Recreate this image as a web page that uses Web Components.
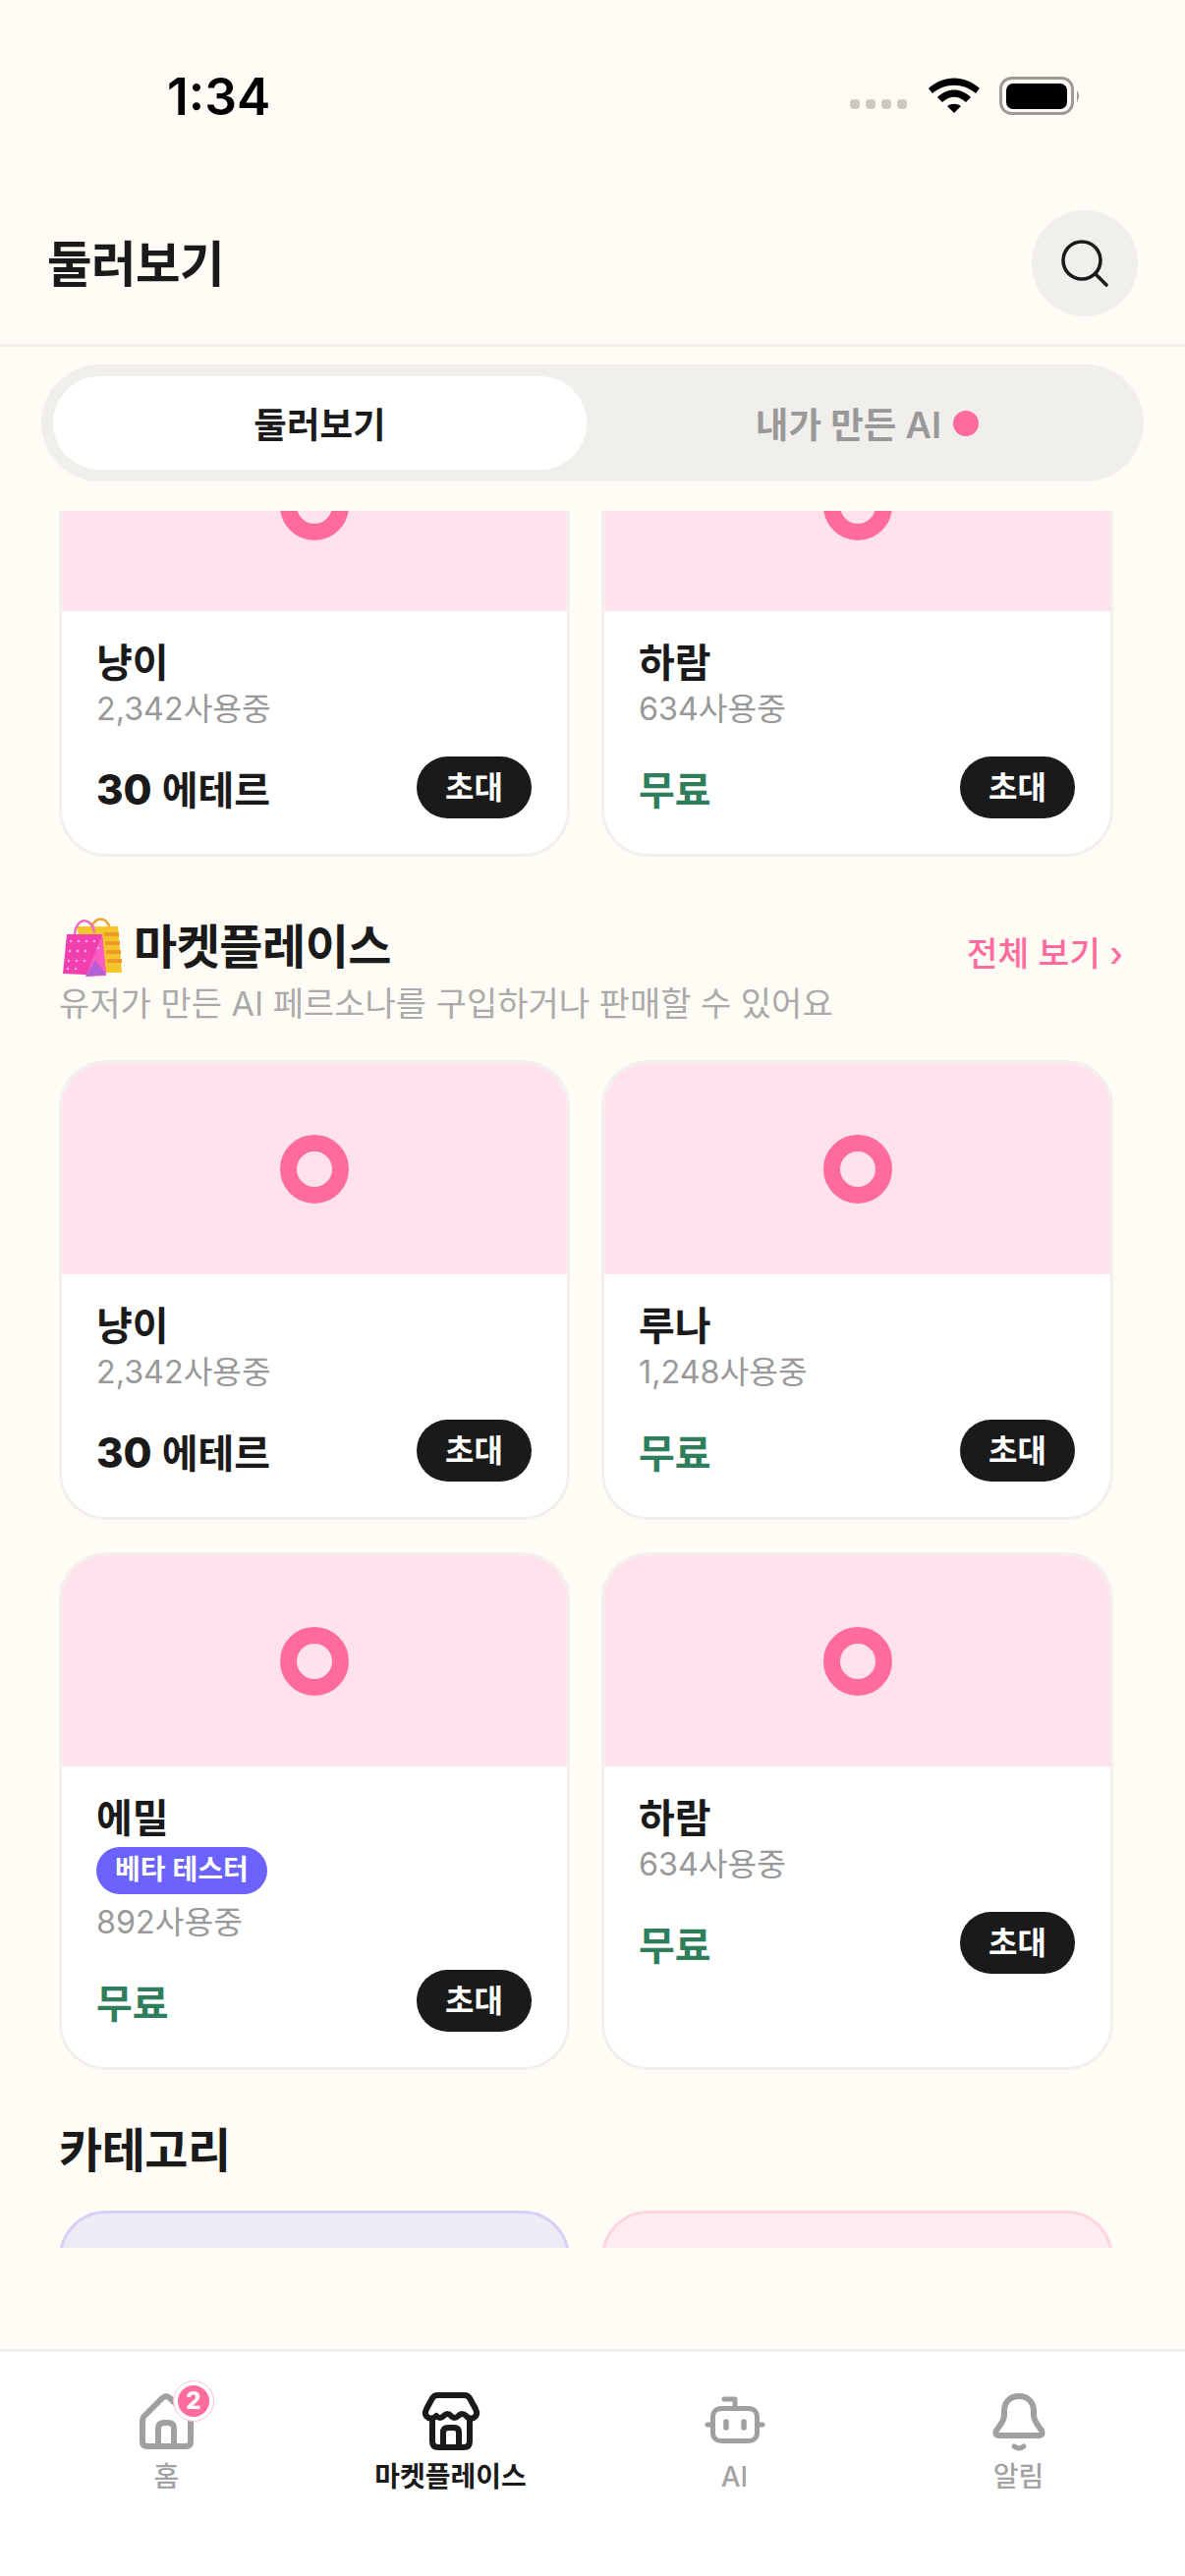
<!DOCTYPE html>
<html lang="ko">
<head>
<meta charset="utf-8">
<title>둘러보기</title>
<style>
  html, body { margin: 0; padding: 0; background: #fffcf5; }
  body { font-family: Inter, "Noto Sans CJK KR", sans-serif; color: #1a1a1a; }
</style>
</head>
<body>
<app-shell>
  <status-bar slot="top" time="1:34"></status-bar>
  <page-header slot="top" title="둘러보기"></page-header>
  <seg-tabs slot="top"></seg-tabs>

  <persona-grid>
    <persona-card name="냥이" users="2,342사용중" cost="30"></persona-card>
    <persona-card name="하람" users="634사용중"></persona-card>
  </persona-grid>

  <section-head title="마켓플레이스" sub="유저가 만든 AI 페르소나를 구입하거나 판매할 수 있어요" more="전체 보기 ›">
    <shopping-bags></shopping-bags>
  </section-head>
  <persona-grid>
    <persona-card name="냥이" users="2,342사용중" cost="30"></persona-card>
    <persona-card name="루나" users="1,248사용중"></persona-card>
    <persona-card name="에밀" users="892사용중" badge="베타 테스터"></persona-card>
    <persona-card name="하람" users="634사용중"></persona-card>
  </persona-grid>

  <section-head title="카테고리" plain></section-head>
  <persona-grid>
    <category-card tone="violet"></category-card>
    <category-card tone="rose"></category-card>
  </persona-grid>

  <tab-bar slot="bottom"></tab-bar>
</app-shell>

<script>
const define = (tag, html, setup) => {
  const template = document.createElement("template");
  template.innerHTML = html;
  customElements.define(tag, class extends HTMLElement {
    constructor() {
      super();
      this.attachShadow({ mode: "open" }).appendChild(template.content.cloneNode(true));
    }
    connectedCallback() {
      if (setup) setup(this, this.shadowRoot);
    }
  });
};

define("app-shell", `
  <style>
    :host { display: flex; flex-direction: column; width: 1206px; height: 2622px; overflow: hidden; background: #fffcf5; }
    #scroll { flex: 1; min-height: 0; overflow: hidden; margin-bottom: 103px; }
    /* list is parked partway down, the first row is already scrolled off */
    #list { margin-top: -116px; }
  </style>
  <slot name="top"></slot>
  <div id="scroll"><div id="list"><slot></slot></div></div>
  <slot name="bottom"></slot>
`);

define("status-bar", `
  <style>
    :host { display: flex; align-items: flex-start; height: 214px; box-sizing: border-box; padding: 67px 0 0 170px; }
    #time { font: 600 51.5px/62px Inter, sans-serif; color: #000; width: 695px; }
    svg { display: block; margin-top: 11px; }
  </style>
  <div id="time"></div>
  <svg width="240" height="40" viewBox="0 0 240 40">
    <g fill="#ccc9c3">
      <rect x="0" y="23" width="10" height="10" rx="4"/>
      <rect x="16" y="23" width="10" height="10" rx="4"/>
      <rect x="32" y="23" width="10" height="10" rx="4"/>
      <rect x="48" y="23" width="10" height="10" rx="4"/>
    </g>
    <g fill="#000">
      <path d="M80 11 C95 -3 117 -3 132 11 L128 16 C115 5 97 5 84 16 Z" transform="translate(0 1)"/>
      <path d="M89 21 C99 11 113 11 123 21 L118 26 C110 19 102 19 94 26 Z"/>
      <path d="M99 30 C103 27 109 27 113 30 L106 37 Z"/>
    </g>
    <rect x="153.5" y="1.5" width="73" height="36" rx="11" fill="none" stroke="#9c9a94" stroke-width="3"/>
    <rect x="159" y="7" width="62" height="26" rx="7" fill="#000"/>
    <path d="M231 14 Q235 19 231 26 Z" fill="#9c9a94"/>
  </svg>
`, (el, root) => { root.getElementById("time").textContent = el.getAttribute("time"); });

define("page-header", `
  <style>
    :host { display: flex; align-items: center; justify-content: space-between; padding: 0 48px 28px; border-bottom: 3px solid #f0efec; }
    h1 { margin: 0; font-size: 49.5px; line-height: 106px; font-weight: 700; letter-spacing: -0.5px; padding-top: 2px; }
    #search { width: 108px; height: 108px; border-radius: 50%; background: #f0efec; display: flex; align-items: center; justify-content: center; }
  </style>
  <h1></h1>
  <div id="search">
    <svg width="56" height="56" viewBox="0 0 56 56" fill="none" stroke="#1a1a1a" stroke-width="3.6" stroke-linecap="round">
      <circle cx="25" cy="25" r="19"/>
      <path d="M39 39 L50 50"/>
    </svg>
  </div>
`, (el, root) => { root.querySelector("h1").textContent = el.getAttribute("title"); });

define("seg-tabs", `
  <style>
    :host { display: flex; margin: 18px 42px 30px; padding: 12px; height: 119px; box-sizing: border-box; border-radius: 60px; background: #f0efec; font-size: 36.5px; font-weight: 600; }
    div { display: flex; align-items: center; justify-content: center; }
    #on { width: 543px; background: #fff; border-radius: 48px; color: #1a1a1a; }
    #off { flex: 1; gap: 12px; color: #999; padding-left: 16px; }
    i { width: 26px; height: 26px; border-radius: 50%; background: #ff6b9d; }
  </style>
  <div id="on">둘러보기</div>
  <div id="off">내가 만든 AI<i></i></div>
`);

define("persona-grid", `
  <style>
    :host { display: grid; grid-template-columns: 520px 521px; gap: 33px 32px; padding-left: 60px; }
  </style>
  <slot></slot>
`);

define("persona-card", `
  <style>
    :host { display: block; background: #fff; border: 3px solid #f2f0ec; border-radius: 48px; overflow: hidden; box-sizing: border-box; }
    #art { height: 215px; background: #ffe2ec; display: flex; align-items: center; justify-content: center; }
    #art i { width: 36px; height: 36px; border: 17px solid #ff6b9d; border-radius: 50%; }
    #body { padding: 29px 36px 36px 35px; }
    #name { font-size: 40px; line-height: 48px; font-weight: 600; }
    #badge { display: none; width: fit-content; margin: 5px 0 6px; padding: 0 19px; height: 48px; line-height: 47px; border-radius: 24px; background: #6c63ff; color: #fff; font-size: 28px; font-weight: 600; }
    #users { font-size: 32.3px; line-height: 46px; color: #999; }
    #row { display: flex; align-items: center; justify-content: space-between; margin-top: 25px; }
    #price { font-size: 40px; font-weight: 600; color: #2e7d5b; }
    #price.paid { color: #1a1a1a; }
    #price b { font-weight: 800; font-size: 42px; }
    button { all: unset; width: 117px; height: 63px; border-radius: 32px; background: #1a1a1a; color: #fff; font-size: 32px; font-weight: 600; text-align: center; line-height: 61px; }
  </style>
  <div id="art"><i></i></div>
  <div id="body">
    <div id="name"></div>
    <div id="badge"></div>
    <div id="users"></div>
    <div id="row"><div id="price">무료</div><button>초대</button></div>
  </div>
`, (el, root) => {
  root.getElementById("name").textContent = el.getAttribute("name");
  root.getElementById("users").textContent = el.getAttribute("users");
  const badge = el.getAttribute("badge");
  if (badge) {
    const node = root.getElementById("badge");
    node.textContent = badge;
    node.style.display = "block";
  }
  const cost = el.getAttribute("cost");
  if (cost) {
    const price = root.getElementById("price");
    price.className = "paid";
    price.innerHTML = `<b>${cost}</b> 에테르`;
  }
});

define("category-card", `
  <style>
    :host { display: block; height: 300px; box-sizing: border-box; border: 3px solid; border-radius: 48px; }
    :host([tone="violet"]) { background: #eeebf7; border-color: #d5d0f5; }
    :host([tone="rose"]) { background: #ffecf0; border-color: #ffd5e0; }
  </style>
`);

define("section-head", `
  <style>
    :host { display: block; padding: 59px 63px 35px 60px; }
    :host([plain]) { padding: 50px 63px 29px 60px; }
    #top { display: flex; align-items: center; gap: 10px; }
    h2 { margin: 0; font-size: 48px; line-height: 64px; font-weight: 700; flex: 1; letter-spacing: -0.5px; }
    #more { font-size: 34.5px; color: #ff6b9d; font-weight: 500; margin-top: 8px; }
    #sub { font-size: 34px; line-height: 44px; color: #aaa; margin-top: 3px; }
    :host([plain]) #sub { display: none; }
  </style>
  <div id="top"><slot></slot><h2></h2><div id="more"></div></div>
  <div id="sub"></div>
`, (el, root) => {
  root.querySelector("h2").textContent = el.getAttribute("title");
  root.getElementById("sub").textContent = el.getAttribute("sub") || "";
  root.getElementById("more").textContent = el.getAttribute("more") || "";
});

define("shopping-bags", `
  <style>
    :host { display: block; width: 66px; height: 66px; }
    svg { display: block; }
  </style>
  <svg width="66" height="66" viewBox="0 0 66 66" fill="none">
    <path d="M33 16 C34 2 48 0 52 14" stroke="#f0a030" stroke-width="2.5"/>
    <path d="M18 12 H60 L64 59 H26 Z" fill="#f6c52c"/>
    <path d="M46 20 L61 20 M47 29 L62 29 M48 38 L63 38 M49 47 L64 47" stroke="#ee9a2a" stroke-width="4"/>
    <path d="M16 20 C17 3 33 1 36 18" stroke="#ee6fc0" stroke-width="2.5"/>
    <path d="M8 20 H44 L48 62 L4 60 Z" fill="#f23fb0"/>
    <path d="M44 20 L48 62 L27 63 Z" fill="#f95cc4"/>
    <path d="M27 63 L37 46 L48 61 Z" fill="#b65fd6"/>
    <g fill="#ffb0e0">
      <circle cx="12" cy="27" r="1.2"/><circle cx="20" cy="27" r="1.2"/><circle cx="28" cy="27" r="1.2"/><circle cx="36" cy="27" r="1.2"/>
      <circle cx="11" cy="37" r="1.2"/><circle cx="19" cy="37" r="1.2"/><circle cx="27" cy="37" r="1.2"/><circle cx="40" cy="34" r="1.2"/>
      <circle cx="10" cy="47" r="1.2"/><circle cx="18" cy="47" r="1.2"/><circle cx="26" cy="47" r="1.2"/><circle cx="9" cy="55" r="1.2"/><circle cx="17" cy="55" r="1.2"/>
    </g>
  </svg>
`);

define("tab-bar", `
  <style>
    :host { display: grid; grid-template-columns: repeat(4, 289px); flex: none; height: 231px; box-sizing: border-box; padding: 36px 25px 0; background: #fff; border-top: 3px solid #f0f0ee; font-size: 28px; }
    div { display: flex; flex-direction: column; align-items: center; color: #a3a3a3; font-weight: 500; }
    div.on { color: #1a1a1a; font-weight: 700; }
    #home { position: relative; }
    svg { display: block; height: 68px; }
    span { line-height: 40px; margin-top: 3px; }
    b { position: absolute; left: 152px; top: -6px; width: 32px; height: 32px; border-radius: 50%; background: #ff6b9d; color: #fff; font-size: 24px; font-weight: 800; line-height: 32px; text-align: center; border: 4.5px solid #fff; outline: 1.5px solid #ffc3d8; }
  </style>
  <div id="home">
    <svg width="60" viewBox="0 0 60 68" fill="none" stroke="#a0a0a0" stroke-width="6" stroke-linejoin="round" stroke-linecap="round">
      <g transform="translate(0 5)">
        <path d="M5 29 Q5 26 7 24 L25 6 Q29 2 33 6 L52 24 Q54 26 54 29 V50 Q54 55 49 55 H10 Q5 55 5 50 Z"/>
        <path d="M21 55 V37 Q21 31 27 31 H31 Q37 31 37 37 V55"/>
      </g>
    </svg>
    <span>홈</span>
    <b>2</b>
  </div>
  <div class="on">
    <svg width="64" viewBox="0 0 64 68" fill="none" stroke="#1a1a1a" stroke-width="6" stroke-linejoin="round" stroke-linecap="round">
      <g transform="translate(0 2)">
        <path d="M18 6 H46 Q49 6 51 9 L57 20 Q60 26 55 29 Q51 31 47.5 27 Q43 23 39.5 27 Q35.5 31 32 27 Q28.5 23 24.5 27 Q21 31 17 27 Q13 31 9 29 Q4 26 7 20 L13 9 Q15 6 18 6 Z"/>
        <path d="M13 31 V53 Q13 59 19 59 H45 Q51 59 51 53 V31"/>
        <path d="M24 59 V44 Q24 39 29 39 H35 Q40 39 40 44 V59"/>
      </g>
    </svg>
    <span>마켓플레이스</span>
  </div>
  <div>
    <svg width="64" viewBox="0 0 64 68" fill="none" stroke="#a0a0a0" stroke-width="5" stroke-linecap="round" stroke-linejoin="round">
      <rect x="9.5" y="21.5" width="45" height="33" rx="8"/>
      <path d="M32 21 V12 H21"/>
      <path d="M4 38 H9 M55 38 H60"/>
      <path d="M23 35 V41 M41 35 V41" stroke-width="5.5"/>
    </svg>
    <span>AI</span>
  </div>
  <div>
    <svg width="60" viewBox="0 0 60 68" fill="none" stroke="#a0a0a0" stroke-width="6" stroke-linejoin="round" stroke-linecap="round">
      <g transform="translate(0 2)">
        <path d="M30 7 C20 7 15 14 15 22 V26 C15 33 10 37 7 42 Q5 47 10 47 H50 Q55 47 53 42 C50 37 45 33 45 26 V22 C45 14 40 7 30 7 Z"/>
        <path d="M25 58 Q30 62 35 58" stroke-width="5"/>
      </g>
    </svg>
    <span>알림</span>
  </div>
`);
</script>
</body>
</html>
